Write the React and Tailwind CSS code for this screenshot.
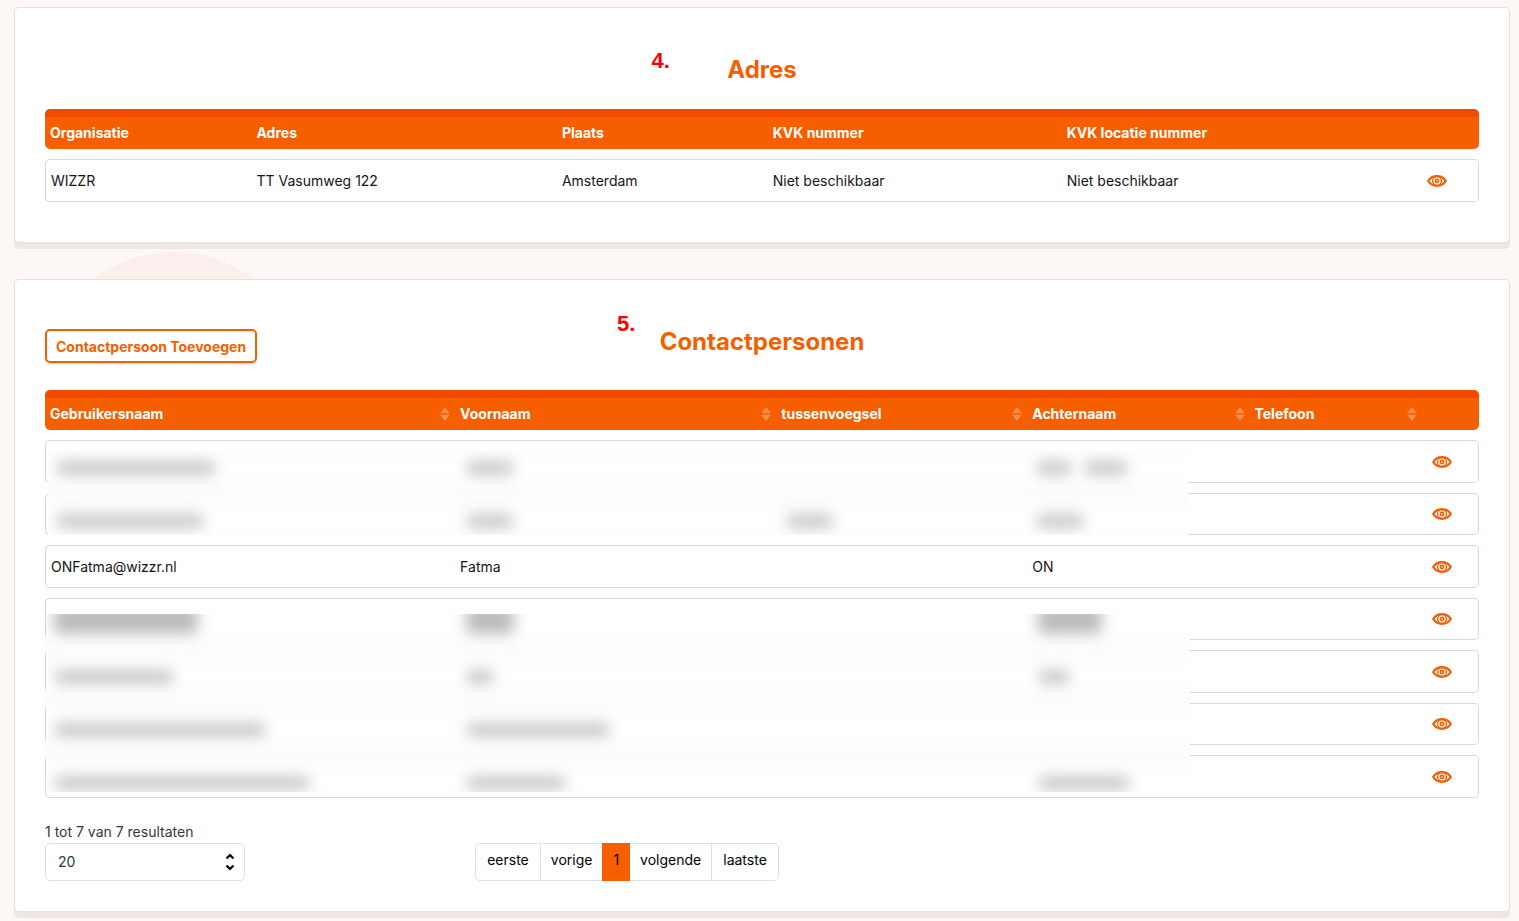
import React, { useState } from 'react'

const ADDRESS_COLUMNS = [
  { label: 'Organisatie', width: 'w-[14.4%]' },
  { label: 'Adres', width: 'w-[21.3%]' },
  { label: 'Plaats', width: 'w-[14.7%]' },
  { label: 'KVK nummer', width: 'w-[20.5%]' },
  { label: 'KVK locatie nummer', width: 'w-[24.8%]' },
]

const CONTACT_COLUMNS = [
  { label: 'Gebruikersnaam', width: 'w-[28.6%]' },
  { label: 'Voornaam', width: 'w-[22.4%]' },
  { label: 'tussenvoegsel', width: 'w-[17.5%]' },
  { label: 'Achternaam', width: 'w-[15.5%]' },
  { label: 'Telefoon', width: 'w-[12%]' },
]

const ADDRESSES = [['WIZZR', 'TT Vasumweg 122', 'Amsterdam', 'Niet beschikbaar', 'Niet beschikbaar']]

const HIDDEN = ['', '', '', '', '']

const CONTACTS = [
  HIDDEN,
  HIDDEN,
  ['ONFatma@wizzr.nl', 'Fatma', '', 'ON', ''],
  HIDDEN,
  HIDDEN,
  HIDDEN,
  HIDDEN,
]

// bar widths per column: username, first name, infix, last name
const MASK_TOP = [
  [['w-40'], ['w-12'], [], ['w-9', 'w-11']],
  [['w-37'], ['w-12'], ['w-12'], ['w-12']],
]

const MASK_BOTTOM = [
  [['w-36'], ['w-12'], [], ['w-16']],
  [['w-30'], ['w-7'], [], ['w-8']],
  [['w-53'], ['w-36'], [], []],
  [['w-64'], ['w-25'], [], ['w-23']],
]

function EyeIcon() {
  return (
    <svg width="20" height="12" viewBox="0 0 20 12" fill="none" stroke="currentColor" aria-hidden="true">
      <path d="M1.200 6C3.200 2.800 6.300 1.200 10 1.200s6.800 1.600 8.800 4.800c-2 3.200-5.100 4.800-8.800 4.800S3.200 9.200 1.200 6z" strokeWidth="2.300" strokeLinejoin="round" />
      <circle cx="10" cy="6" r="4.400" strokeWidth="1.400" />
      <circle cx="10" cy="6" r="1.600" strokeWidth="1.600" />
    </svg>
  )
}

function SortIcon() {
  return (
    <svg width="10" height="14" viewBox="0 0 10 14" fill="currentColor" className="text-white/30" aria-hidden="true">
      <path d="M5 0l4.800 6.300H.2z" />
      <path d="M5 14L.2 7.700h9.600z" />
    </svg>
  )
}

function Card({ children, className = '' }) {
  return (
    <section className={`relative rounded-[5px] border border-[#e6e0dc] bg-white px-[30px] pt-[47px] shadow-[0_6px_0_#efe7e7] ${className}`}>
      {children}
    </section>
  )
}

function DataTable({ label, columns, rows, sortable = false }) {
  return (
    <table aria-label={label} className="-my-[10px] w-full table-fixed border-separate border-spacing-x-0 border-spacing-y-[10px] text-left text-sm">
      <thead>
        <tr className="h-10">
          {columns.map((column) => (
            <th
              key={column.label}
              scope="col"
              className={`${column.width} border-t-8 border-[#f24a00] bg-[#f65f00] px-[5px] py-0 text-sm font-bold text-white first:rounded-l-[5px]`}
            >
              {sortable ? (
                <button type="button" className="flex w-full items-center justify-between">
                  {column.label}
                  <SortIcon />
                </button>
              ) : column.label}
            </th>
          ))}
          <td className="rounded-r-[5px] border-t-8 border-[#f24a00] bg-[#f65f00] p-0" />
        </tr>
      </thead>
      <tbody>
        {rows.map((row, index) => (
          <tr key={index} className="odd:h-[43px] even:h-[42px]">
            {row.map((value, cell) => (
              <td key={cell} className="border-y border-[#ddd6d8] px-[5px] py-0 text-[#151515] first:rounded-l-[5px] first:border-l">
                {value}
              </td>
            ))}
            <td className="rounded-r-[5px] border-y border-r border-[#ddd6d8] py-0 pl-[10px] pr-0">
              <button type="button" aria-label="Bekijken" className="flex text-[#f65f00]">
                <EyeIcon />
              </button>
            </td>
          </tr>
        ))}
      </tbody>
    </table>
  )
}

function PrivacyMask({ rows, className, shift, firstBar }) {
  return (
    <div aria-hidden="true" className={`absolute overflow-hidden ${className}`}>
      <div className={shift}>
        {rows.map((row, index) => (
          <div key={index} className="grid h-[53px] grid-cols-[36%_28%_22%_14%] items-center bg-linear-to-b from-[#fcfcfc] via-white to-[#fcfcfc]">
            {row.map((bars, column) => (
              <div key={column} className="flex gap-3 pl-[8px]">
                {bars.map((width) => (
                  <div key={width} className={`${width} blur-[7px] ${index === 0 ? firstBar : 'h-[14px] rounded-full bg-[#c8c8c8]'}`} />
                ))}
              </div>
            ))}
          </div>
        ))}
      </div>
    </div>
  )
}

export default function App() {
  const [pageSize, setPageSize] = useState('20')
  const pageLink = 'border-y border-r border-[#dfe0e6] px-[11px] pt-[6px]'

  return (
    <div className="relative min-h-screen overflow-hidden bg-[#fdf8f5] pb-[9px] pl-[14px] pr-[9px] pt-[7px] font-[Inter,sans-serif] text-sm text-[#151515]">
      <div className="absolute left-[40px] top-[252px] size-[268px] rounded-full bg-[#fbefee]" />

      <Card className="pb-[40px]">
        <h2 className="mb-6 text-center text-2xl leading-[30px] font-bold text-[#f65f00]">Adres</h2>
        <span className="absolute left-[42.6%] top-[40px] font-['Liberation_Sans',sans-serif] text-[22px] leading-[26px] font-bold text-[#ff0000]">4.</span>
        <DataTable label="Adres" columns={ADDRESS_COLUMNS} rows={ADDRESSES} />
      </Card>

      <Card className="mt-9 pb-[30px]">
        <div className="mb-[27px] grid grid-cols-[1fr_auto_1fr] items-start">
          <button type="button" className="mt-[2px] h-[34px] justify-self-start rounded-[5px] border-2 border-[#f65f00] px-[9px] pt-[2px] text-sm font-bold text-[#f65f00] shadow-[0_1px_1px_#0002]">
            Contactpersoon Toevoegen
          </button>
          <h2 className="text-2xl leading-[30px] font-bold text-[#f65f00]">Contactpersonen</h2>
        </div>
        <span className="absolute left-[40.3%] top-[31px] font-['Liberation_Sans',sans-serif] text-[22px] leading-[26px] font-bold text-[#ff0000]">5.</span>

        <div className="relative flow-root">
          <DataTable label="Contactpersonen" columns={CONTACT_COLUMNS} rows={CONTACTS} sortable />
          <PrivacyMask rows={MASK_TOP} className="left-[3px] top-[60px] h-[85px] w-[79.5%]" shift="-mt-[9px]" firstBar="h-[14px] rounded-full bg-[#c8c8c8]" />
          <PrivacyMask rows={MASK_BOTTOM} className="left-px top-[224px] h-[178px] w-[79.8%]" shift="-mt-[17px]" firstBar="-mt-2 h-7 rounded-md bg-[#bcbcbc]" />
        </div>

        <div className="mt-[23px] flex items-end">
          <div className="w-[30%]">
            <label htmlFor="page-size" className="block leading-[22px] text-[#33363b]">1 tot 7 van 7 resultaten</label>
            <div className="relative w-[200px]">
              <select
                id="page-size"
                value={pageSize}
                onChange={(event) => setPageSize(event.target.value)}
                className="block h-[38px] w-full appearance-none rounded-[5px] border border-[#dfe0e6] bg-white px-3 text-sm text-[#33363b]"
              >
                <option value="20">20</option>
                <option value="50">50</option>
                <option value="100">100</option>
              </select>
              <svg className="pointer-events-none absolute right-[10px] top-[10px]" width="10" height="18" viewBox="0 0 10 18" fill="none" stroke="#000" strokeWidth="2.200" aria-hidden="true">
                <path d="M1.500 5.500L5 2l3.500 3.500M1.500 12.500L5 16l3.500-3.500" />
              </svg>
            </div>
          </div>
          <nav aria-label="Paginering" className="flex h-[38px] text-black">
            <a href="#eerste" className={`${pageLink} rounded-l-[5px] border-l`}>eerste</a>
            <a href="#vorige" className="border-y border-[#dfe0e6] px-[10px] pt-[6px]">vorige</a>
            <a href="#1" aria-current="page" className="bg-[#f65f00] px-[11px] pt-[7px]">1</a>
            <a href="#volgende" className="border-y border-r border-[#dfe0e6] px-[10px] pt-[6px]">volgende</a>
            <a href="#laatste" className={`${pageLink} rounded-r-[5px]`}>laatste</a>
          </nav>
        </div>
      </Card>
    </div>
  )
}
